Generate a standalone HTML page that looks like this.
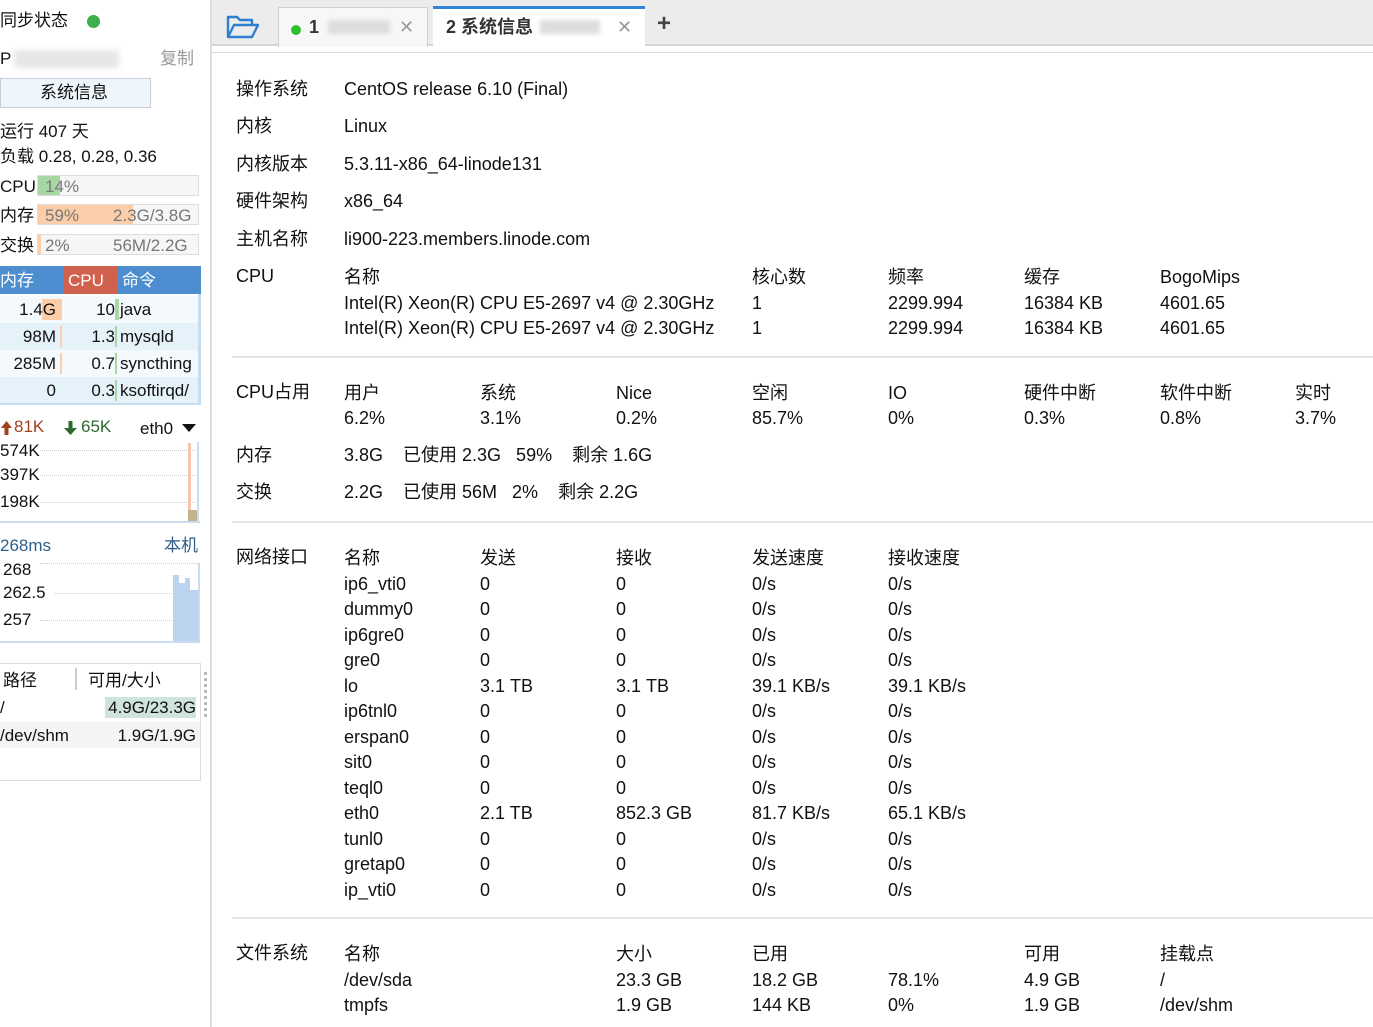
<!DOCTYPE html>
<html><head><meta charset="utf-8"><style>
*{margin:0;padding:0;box-sizing:border-box}
body{width:1373px;height:1027px;overflow:hidden;background:#fff;font-family:"Liberation Sans","Noto Sans CJK SC",sans-serif;color:#111;position:relative}
.a{position:absolute;white-space:nowrap;line-height:22px}
.m{font-size:18px}
.s{font-size:17px}
.hr{position:absolute;left:232px;right:0;height:2px;background:#e4e4e4}
</style></head><body>
<!-- sidebar -->
<div class="a s" style="left:0;top:10px">同步状态</div>
<div style="position:absolute;left:87px;top:15px;width:13px;height:13px;border-radius:50%;background:#3db04a"></div>
<div class="a s" style="left:0;top:48px">P</div>
<div style="position:absolute;left:14px;top:50px;width:105px;height:18px;background:#e6e6e6;filter:blur(3px)"></div>
<div class="a s" style="left:160px;top:48px;color:#999">复制</div>
<div style="position:absolute;left:0;top:78px;width:151px;height:30px;background:#eef6fc;border:1px solid #c8cfd6"></div>
<div class="a s" style="left:40px;top:82px">系统信息</div>
<div class="a s" style="left:0;top:121px">运行 407 天</div>
<div class="a s" style="left:0;top:146px">负载 0.28, 0.28, 0.36</div>
<div class="a s" style="left:0;top:176px">CPU</div>
<div style="position:absolute;left:37px;top:175px;width:162px;height:21px;background:#f6f6f6;border:1px solid #ddd"></div>
<div style="position:absolute;left:38px;top:176px;width:22px;height:19px;background:#a7d8a3"></div>
<div class="a s" style="left:45px;top:176px;color:#777">14%</div>
<div class="a s" style="left:0;top:205px">内存</div>
<div style="position:absolute;left:37px;top:204px;width:162px;height:21px;background:#f6f6f6;border:1px solid #ddd"></div>
<div style="position:absolute;left:38px;top:205px;width:95px;height:19px;background:#fbcda8"></div>
<div class="a s" style="left:45px;top:205px;color:#777">59%</div>
<div class="a s" style="left:113px;top:205px;color:#777">2.3G/3.8G</div>
<div class="a s" style="left:0;top:235px">交换</div>
<div style="position:absolute;left:37px;top:234px;width:162px;height:21px;background:#f6f6f6;border:1px solid #ddd"></div>
<div style="position:absolute;left:38px;top:235px;width:3px;height:19px;background:#fbcda8"></div>
<div class="a s" style="left:45px;top:235px;color:#777">2%</div>
<div class="a s" style="left:113px;top:235px;color:#777">56M/2.2G</div>
<!-- process table -->
<div style="position:absolute;left:0;top:266px;width:201px;height:28px;background:#4d8ed1"></div>
<div style="position:absolute;left:63px;top:266px;width:54px;height:28px;background:#d1604c"></div>
<div class="a s" style="left:0;top:270px;color:#fff">内存</div>
<div class="a s" style="left:68px;top:270px;color:#fff">CPU</div>
<div class="a s" style="left:122px;top:270px;color:#fff">命令</div>
<div style="position:absolute;left:0;top:296px;width:200px;height:27px;background:#f3f9fd"></div>
<div style="position:absolute;left:0;top:323px;width:200px;height:27px;background:#e6f2fa"></div>
<div style="position:absolute;left:0;top:350px;width:200px;height:27px;background:#f3f9fd"></div>
<div style="position:absolute;left:0;top:377px;width:200px;height:27px;background:#e6f2fa"></div>
<div style="position:absolute;left:198px;top:294px;width:3px;height:110px;background:#c7dcef"></div>
<div style="position:absolute;left:0;top:403px;width:201px;height:2px;background:#c7dcef"></div>
<div style="position:absolute;left:42px;top:299px;width:20px;height:21px;background:#fbcda8"></div>
<div style="position:absolute;left:60px;top:326px;width:2px;height:21px;background:#fbcda8"></div>
<div style="position:absolute;left:60px;top:353px;width:2px;height:21px;background:#fbcda8"></div>
<div style="position:absolute;left:115px;top:299px;width:4px;height:21px;background:#a7d8a3"></div>
<div style="position:absolute;left:115px;top:326px;width:2px;height:21px;background:#a7d8a3"></div>
<div style="position:absolute;left:115px;top:353px;width:2px;height:21px;background:#a7d8a3"></div>
<div style="position:absolute;left:115px;top:380px;width:2px;height:21px;background:#a7d8a3"></div>
<div class="a s" style="left:0;width:56px;text-align:right;top:299px">1.4G</div>
<div class="a s" style="left:0;width:56px;text-align:right;top:326px">98M</div>
<div class="a s" style="left:0;width:56px;text-align:right;top:353px">285M</div>
<div class="a s" style="left:0;width:56px;text-align:right;top:380px">0</div>
<div class="a s" style="left:60px;width:55px;text-align:right;top:299px">10</div>
<div class="a s" style="left:60px;width:55px;text-align:right;top:326px">1.3</div>
<div class="a s" style="left:60px;width:55px;text-align:right;top:353px">0.7</div>
<div class="a s" style="left:60px;width:55px;text-align:right;top:380px">0.3</div>
<div class="a s" style="left:120px;top:299px">java</div>
<div class="a s" style="left:120px;top:326px">mysqld</div>
<div class="a s" style="left:120px;top:353px">syncthing</div>
<div class="a s" style="left:120px;top:380px">ksoftirqd/</div>
<!-- net -->
<svg style="position:absolute;left:0;top:420px" width="13" height="16" viewBox="0 0 13 16"><path d="M6.5 1L1 8h3.5v7h4V8H12z" fill="#a0421f"/></svg>
<div class="a s" style="left:14px;top:416px;color:#a0421f">81K</div>
<svg style="position:absolute;left:63px;top:420px" width="15" height="16" viewBox="0 0 15 16"><path d="M7.5 15L1 8h4.5V1h4v7H14z" fill="#2d6a2d"/></svg>
<div class="a s" style="left:81px;top:416px;color:#2d6a2d">65K</div>
<div class="a s" style="left:140px;top:418px">eth0</div>
<svg style="position:absolute;left:182px;top:424px" width="14" height="9" viewBox="0 0 14 9"><path d="M0 0h14L7 8z" fill="#111"/></svg>
<div style="position:absolute;left:40px;top:450px;width:155px;border-top:1px dotted #ccc"></div>
<div style="position:absolute;left:40px;top:475px;width:155px;border-top:1px dotted #ccc"></div>
<div style="position:absolute;left:40px;top:502px;width:155px;border-top:1px dotted #ccc"></div>
<div style="position:absolute;left:197px;top:442px;width:2px;height:80px;background:#c7dcef"></div>
<div style="position:absolute;left:0;top:521px;width:200px;height:2px;background:#c7dcef"></div>
<div style="position:absolute;left:188px;top:443px;width:3px;height:78px;background:#f7c5ae"></div>
<div style="position:absolute;left:188px;top:510px;width:9px;height:11px;background:#c4b28a"></div>
<div class="a s" style="left:0;top:440px">574K</div>
<div class="a s" style="left:0;top:464px">397K</div>
<div class="a s" style="left:0;top:491px">198K</div>
<!-- ping -->
<div class="a s" style="left:0;top:535px;color:#2d5f8a">268ms</div>
<div class="a s" style="left:164px;top:535px;color:#2d5f8a">本机</div>
<div style="position:absolute;left:40px;top:563px;width:160px;border-top:1px dotted #ccc"></div>
<div style="position:absolute;left:55px;top:593px;width:145px;border-top:1px dotted #ccc"></div>
<div style="position:absolute;left:40px;top:620px;width:160px;border-top:1px dotted #ccc"></div>
<div style="position:absolute;left:173px;top:575px;width:6px;height:67px;background:#bcd3ef"></div>
<div style="position:absolute;left:179px;top:583px;width:6px;height:59px;background:#bcd3ef"></div>
<div style="position:absolute;left:185px;top:578px;width:5px;height:64px;background:#bcd3ef"></div>
<div style="position:absolute;left:190px;top:590px;width:8px;height:52px;background:#bcd3ef"></div>
<div style="position:absolute;left:198px;top:563px;width:2px;height:80px;background:#c7dcef"></div>
<div style="position:absolute;left:0;top:641px;width:200px;height:2px;background:#c7dcef"></div>
<div class="a s" style="left:3px;top:559px">268</div>
<div class="a s" style="left:3px;top:582px">262.5</div>
<div class="a s" style="left:3px;top:609px">257</div>
<!-- fs -->
<div style="position:absolute;left:0;top:663px;width:201px;height:118px;border:1px solid #ddd;border-left:none"></div>
<div style="position:absolute;left:75px;top:668px;width:2px;height:22px;background:#ccc"></div>
<div class="a s" style="left:3px;top:670px">路径</div>
<div class="a s" style="left:88px;top:670px">可用/大小</div>
<div style="position:absolute;left:105px;top:697px;width:91px;height:21px;background:#cfe4dc"></div>
<div class="a s" style="left:0;top:697px">/</div>
<div class="a s" style="left:0;width:196px;text-align:right;top:697px">4.9G/23.3G</div>
<div style="position:absolute;left:0;top:722px;width:200px;height:26px;background:#f4f4f4"></div>
<div class="a s" style="left:0;top:725px">/dev/shm</div>
<div class="a s" style="left:0;width:196px;text-align:right;top:725px">1.9G/1.9G</div>
<div style="position:absolute;left:204px;top:672px;width:2px;height:45px;border-left:3px dotted #bbb"></div>
<div style="position:absolute;left:210px;top:0;width:2px;height:1027px;background:#ddd"></div>
<!-- tabs -->
<div style="position:absolute;left:212px;top:0;right:0;height:46px;background:#ececec;border-bottom:2px solid #d6d6d6"></div>
<svg style="position:absolute;left:226px;top:14px" width="34" height="26" viewBox="0 0 34 26"><path d="M2 23V3h9l3 3h12v5M2 23l6-12h24l-6 12z" fill="none" stroke="#2f7fd0" stroke-width="2.4" stroke-linejoin="round"/></svg>
<div style="position:absolute;left:278px;top:7px;width:150px;height:40px;background:#f7f7f7;border:1px solid #d0d0d0;border-bottom:none"></div>
<div style="position:absolute;left:291px;top:25px;width:10px;height:10px;border-radius:50%;background:#2cc02c"></div>
<div class="a m" style="left:309px;top:16px;font-weight:bold;color:#333">1</div>
<div style="position:absolute;left:328px;top:20px;width:62px;height:14px;background:#ddd;filter:blur(2px)"></div>
<div class="a m" style="left:399px;top:16px;color:#999">✕</div>
<div style="position:absolute;left:433px;top:6px;width:212px;height:42px;background:#fff;border-top:3px solid #2e86d8"></div>
<div class="a m" style="left:446px;top:16px;font-weight:bold;color:#333">2 系统信息</div>
<div style="position:absolute;left:540px;top:20px;width:60px;height:14px;background:#ddd;filter:blur(2px)"></div>
<div class="a m" style="left:617px;top:16px;color:#999">✕</div>
<div class="a" style="left:657px;top:13px;font-size:24px;font-weight:bold;color:#444">+</div>
<div style="position:absolute;left:212px;top:52px;right:0;height:1px;background:#ddd"></div>
<!-- main content -->
<div class="a m" style="left:236px;top:78px">操作系统</div><div class="a m" style="left:344px;top:78px">CentOS release 6.10 (Final)</div>
<div class="a m" style="left:236px;top:115px">内核</div><div class="a m" style="left:344px;top:115px">Linux</div>
<div class="a m" style="left:236px;top:153px">内核版本</div><div class="a m" style="left:344px;top:153px">5.3.11-x86_64-linode131</div>
<div class="a m" style="left:236px;top:190px">硬件架构</div><div class="a m" style="left:344px;top:190px">x86_64</div>
<div class="a m" style="left:236px;top:228px">主机名称</div><div class="a m" style="left:344px;top:228px">li900-223.members.linode.com</div>
<div class="a m" style="left:236px;top:265px">CPU</div>
<div class="a m" style="left:344px;top:265px;line-height:25.5px">名称<br>Intel(R) Xeon(R) CPU E5-2697 v4 @ 2.30GHz<br>Intel(R) Xeon(R) CPU E5-2697 v4 @ 2.30GHz</div>
<div class="a m" style="left:752px;top:265px;line-height:25.5px">核心数<br>1<br>1</div>
<div class="a m" style="left:888px;top:265px;line-height:25.5px">频率<br>2299.994<br>2299.994</div>
<div class="a m" style="left:1024px;top:265px;line-height:25.5px">缓存<br>16384 KB<br>16384 KB</div>
<div class="a m" style="left:1160px;top:265px;line-height:25.5px">BogoMips<br>4601.65<br>4601.65</div>
<div class="hr" style="top:356px"></div>
<div class="a m" style="left:236px;top:381px">CPU占用</div>
<div class="a m" style="left:344px;top:381px;line-height:25px">用户<br>6.2%</div>
<div class="a m" style="left:480px;top:381px;line-height:25px">系统<br>3.1%</div>
<div class="a m" style="left:616px;top:381px;line-height:25px">Nice<br>0.2%</div>
<div class="a m" style="left:752px;top:381px;line-height:25px">空闲<br>85.7%</div>
<div class="a m" style="left:888px;top:381px;line-height:25px">IO<br>0%</div>
<div class="a m" style="left:1024px;top:381px;line-height:25px">硬件中断<br>0.3%</div>
<div class="a m" style="left:1160px;top:381px;line-height:25px">软件中断<br>0.8%</div>
<div class="a m" style="left:1295px;top:381px;line-height:25px">实时<br>3.7%</div>
<div class="a m" style="left:236px;top:444px">内存</div>
<div class="a m" style="left:344px;top:444px">3.8G&nbsp;&nbsp;&nbsp;&nbsp;已使用 2.3G&nbsp;&nbsp;&nbsp;59%&nbsp;&nbsp;&nbsp;&nbsp;剩余 1.6G</div>
<div class="a m" style="left:236px;top:481px">交换</div>
<div class="a m" style="left:344px;top:481px">2.2G&nbsp;&nbsp;&nbsp;&nbsp;已使用 56M&nbsp;&nbsp;&nbsp;2%&nbsp;&nbsp;&nbsp;&nbsp;剩余 2.2G</div>
<div class="hr" style="top:521px"></div>
<div class="a m" style="left:236px;top:546px">网络接口</div>
<div class="a m" style="left:344px;top:546px;line-height:25.5px">名称<br>ip6_vti0<br>dummy0<br>ip6gre0<br>gre0<br>lo<br>ip6tnl0<br>erspan0<br>sit0<br>teql0<br>eth0<br>tunl0<br>gretap0<br>ip_vti0</div>
<div class="a m" style="left:480px;top:546px;line-height:25.5px">发送<br>0<br>0<br>0<br>0<br>3.1 TB<br>0<br>0<br>0<br>0<br>2.1 TB<br>0<br>0<br>0</div>
<div class="a m" style="left:616px;top:546px;line-height:25.5px">接收<br>0<br>0<br>0<br>0<br>3.1 TB<br>0<br>0<br>0<br>0<br>852.3 GB<br>0<br>0<br>0</div>
<div class="a m" style="left:752px;top:546px;line-height:25.5px">发送速度<br>0/s<br>0/s<br>0/s<br>0/s<br>39.1 KB/s<br>0/s<br>0/s<br>0/s<br>0/s<br>81.7 KB/s<br>0/s<br>0/s<br>0/s</div>
<div class="a m" style="left:888px;top:546px;line-height:25.5px">接收速度<br>0/s<br>0/s<br>0/s<br>0/s<br>39.1 KB/s<br>0/s<br>0/s<br>0/s<br>0/s<br>65.1 KB/s<br>0/s<br>0/s<br>0/s</div>
<div class="hr" style="top:917px"></div>
<div class="a m" style="left:236px;top:942px">文件系统</div>
<div class="a m" style="left:344px;top:942px;line-height:25.5px">名称<br>/dev/sda<br>tmpfs</div>
<div class="a m" style="left:616px;top:942px;line-height:25.5px">大小<br>23.3 GB<br>1.9 GB</div>
<div class="a m" style="left:752px;top:942px;line-height:25.5px">已用<br>18.2 GB<br>144 KB</div>
<div class="a m" style="left:888px;top:942px;line-height:25.5px"><br>78.1%<br>0%</div>
<div class="a m" style="left:1024px;top:942px;line-height:25.5px">可用<br>4.9 GB<br>1.9 GB</div>
<div class="a m" style="left:1160px;top:942px;line-height:25.5px">挂载点<br>/<br>/dev/shm</div>
</body></html>
